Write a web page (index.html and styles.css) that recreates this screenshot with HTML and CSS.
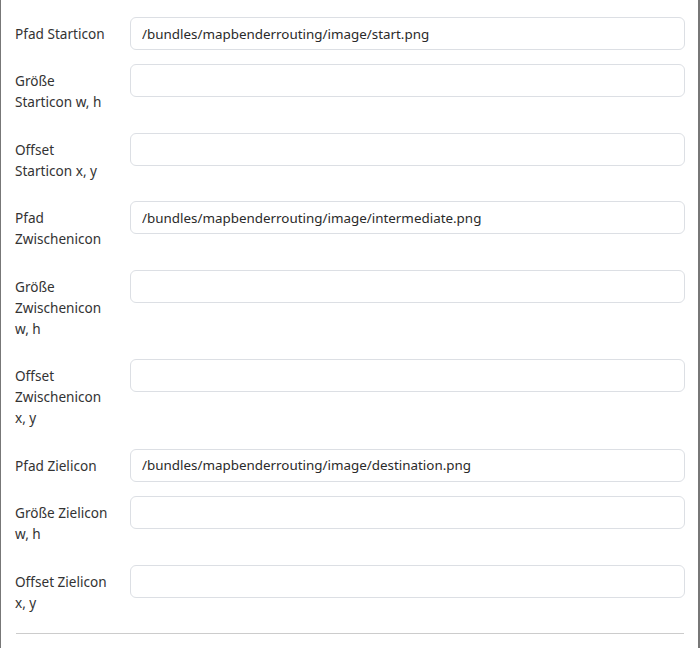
FILE: index.html
```html
<!DOCTYPE html>
<html lang="de">
<head>
<meta charset="utf-8">
<title>Routing</title>
<link rel="stylesheet" href="styles.css">
</head>
<body>
<div class="panel">
  <div class="row"><label class="lbl">Pfad Starticon</label><input class="field" type="text" value="/bundles/mapbenderrouting/image/start.png"></div>
  <div class="row"><label class="lbl">Größe<br>Starticon w, h</label><input class="field" type="text" value=""></div>
  <div class="row"><label class="lbl">Offset<br>Starticon x, y</label><input class="field" type="text" value=""></div>
  <div class="row"><label class="lbl">Pfad<br>Zwischenicon</label><input class="field" type="text" value="/bundles/mapbenderrouting/image/intermediate.png"></div>
  <div class="row"><label class="lbl">Größe<br>Zwischenicon<br>w, h</label><input class="field" type="text" value=""></div>
  <div class="row"><label class="lbl">Offset<br>Zwischenicon<br>x, y</label><input class="field" type="text" value=""></div>
  <div class="row"><label class="lbl">Pfad Zielicon</label><input class="field" type="text" value="/bundles/mapbenderrouting/image/destination.png"></div>
  <div class="row"><label class="lbl">Größe Zielicon<br>w, h</label><input class="field" type="text" value=""></div>
  <div class="row"><label class="lbl">Offset Zielicon<br>x, y</label><input class="field" type="text" value=""></div>
  <hr class="sep">
</div>
</body>
</html>
```
FILE: styles.css
```css
html, body {
  margin: 0;
  padding: 0;
  background: #ffffff;
}
.panel {
  box-sizing: border-box;
  height: 648px;
  overflow: hidden;
  border-left: 1px solid #777777;
  border-right: 2px solid #777777;
  padding: 17px 13px 0 14px;
  font-family: "Noto Sans", "Open Sans", sans-serif;
  font-size: 13.6px;
  color: #333333;
}
.row {
  display: grid;
  grid-template-columns: 115px 1fr;
  align-items: start;
  margin-bottom: 14.45px;
}
.lbl {
  padding: 6px 0;
  line-height: 21px;
}
.field {
  box-sizing: border-box;
  width: 100%;
  height: 33px;
  margin: 0;
  border: 1px solid #dcdfe4;
  border-radius: 6px;
  padding: 0 11px;
  font-family: inherit;
  font-size: 13.4px;
  color: #2a2a2a;
  background: #ffffff;
  outline: none;
}
.sep {
  margin: 0 1px 0 1px;
  border: 0;
  border-top: 1px solid #cccccc;
}
```
